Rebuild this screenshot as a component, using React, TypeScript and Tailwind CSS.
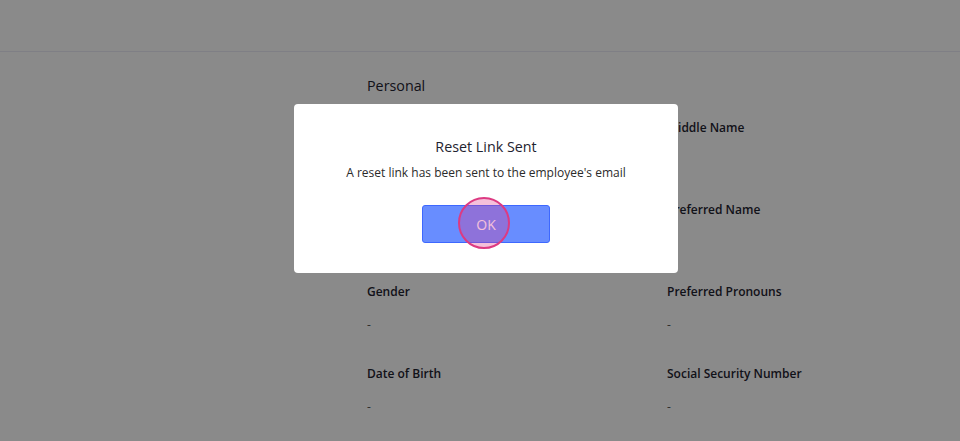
import React from "react";

const Field = ({ label }: { label: string }) => (
  <div className="flex flex-col">
    <div className="h-[18px] text-[12px] leading-[18px] font-semibold text-[#1f2330]">{label}</div>
    <div className="mt-[15px] h-[18px] text-[12px] leading-[18px] text-[#555]">-</div>
  </div>
);

export default function App() {
  return (
    <div
      className="relative w-[960px] h-[441px] overflow-hidden bg-white"
      style={{ fontFamily: '"Open Sans", "Noto Sans", sans-serif' }}
    >
      <div className="h-[52px] border-b border-[#eaeaf5]" />
      <div className="pl-[367px] pt-[24px]">
        <div className="text-[14.3px] leading-[20px] font-medium text-[#1f2330]">Personal</div>
        <div className="mt-[23px] grid grid-cols-[300px_300px] gap-y-[31px]">
          <Field label="First Name" />
          <Field label="Middle Name" />
          <Field label="Last Name" />
          <Field label="Preferred Name" />
          <Field label="Gender" />
          <Field label="Preferred Pronouns" />
          <Field label="Date of Birth" />
          <Field label="Social Security Number" />
        </div>
      </div>

      <div className="absolute inset-0 bg-black/[0.46]" />

      <div className="absolute left-[294px] top-[104px] w-[384px] h-[169px] rounded-[4px] bg-white flex flex-col items-center pt-[33px]">
        <div className="text-[14.3px] leading-[20px] font-medium text-[#1f2330]">Reset Link Sent</div>
        <div className="mt-[7px] text-[12px] leading-[18px] text-[#2b2b2b]">
          A reset link has been sent to the employee's email
        </div>
        <button className="mt-[23px] w-[128px] h-[38px] rounded-[3px] bg-[#688dff] border border-[#3d68ff] text-white text-[14px] font-medium">
          OK
        </button>
      </div>

      <div className="absolute left-[458px] top-[197px] w-[52px] h-[52px] rounded-full border-2 border-[#dd3a82] bg-[rgba(225,60,140,0.32)]" />
    </div>
  );
}
